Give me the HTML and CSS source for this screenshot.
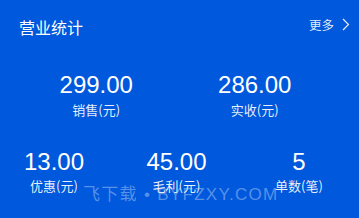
FILE: index.html
```html
<!DOCTYPE html>
<html lang="zh-CN">
<head>
<meta charset="utf-8">
<link rel="stylesheet" href="styles.css">
</head>
<body>
<div class="card">
  <div class="header">
    <div class="title">营业统计</div>
    <div class="more">更多<svg class="chev" width="8" height="13" viewBox="0 0 8 13"><path d="M1 1 L6.5 6.5 L1 12" fill="none" stroke="currentColor" stroke-width="1.2"/></svg></div>
  </div>
  <div class="row row-two">
    <div class="stat"><div class="num">299.00</div><div class="label">销售(元)</div></div>
    <div class="stat"><div class="num">286.00</div><div class="label">实收(元)</div></div>
  </div>
  <div class="row row-three">
    <div class="stat"><div class="num">13.00</div><div class="label">优惠(元)</div></div>
    <div class="stat"><div class="num">45.00</div><div class="label">毛利(元)</div></div>
    <div class="stat"><div class="num">5</div><div class="label">单数(笔)</div></div>
  </div>
  <div class="watermark">飞下载 • BYFZXY.COM</div>
</div>
</body>
</html>
```
FILE: styles.css
```css
html, body {
  margin: 0;
  padding: 0;
  background: #0058dc;
}
.card {
  position: relative;
  width: 359px;
  height: 218px;
  overflow: hidden;
  background: #0058dc;
  color: #fff;
  font-family: "Liberation Sans", "Noto Sans CJK SC", sans-serif;
}
.header {
  display: flex;
  justify-content: space-between;
  align-items: center;
  height: 52px;
  padding: 0 9px 0 19px;
}
.title {
  font-size: 16px;
  line-height: 20px;
  font-family: "Noto Sans CJK SC", sans-serif;
  margin-top: 1px;
}
.more {
  display: flex;
  align-items: center;
  font-size: 12.5px;
  line-height: 16px;
  font-family: "Noto Sans CJK SC", sans-serif;
  color: rgba(255, 255, 255, 0.9);
  margin-top: -3px;
}
.chev {
  margin-left: 8px;
}
.row {
  display: grid;
}
.row-two {
  grid-template-columns: 1fr 1fr;
  padding: 0 25px 0 17px;
  margin-top: 20px;
}
.row-three {
  display: flex;
  justify-content: space-between;
  padding: 0 20px 0 14px;
  margin-top: 31px;
}
.row-three .stat {
  width: 80px;
}
.stat {
  display: flex;
  flex-direction: column;
  align-items: center;
}
.num {
  font-size: 24px;
  line-height: 26px;
}
.label {
  font-size: 13px;
  line-height: 17px;
  margin-top: 3px;
  font-family: "Noto Sans CJK SC", sans-serif;
  color: rgba(255, 255, 255, 0.92);
}
.row-three .label {
  margin-top: 2px;
}
.watermark {
  position: absolute;
  left: 83px;
  top: 184px;
  font-size: 17px;
  line-height: 22px;
  letter-spacing: 1.3px;
  color: rgba(255, 255, 255, 0.35);
  white-space: nowrap;
  font-family: "Liberation Sans", "Noto Sans CJK SC", sans-serif;
}
```
